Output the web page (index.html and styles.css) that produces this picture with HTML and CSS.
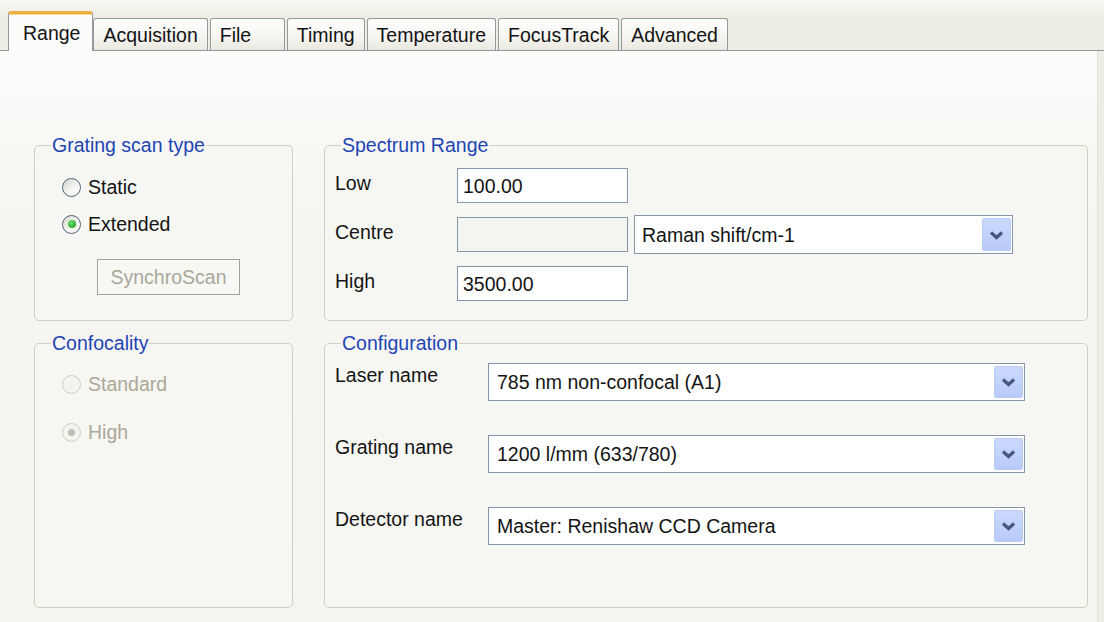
FILE: index.html
```html
<!DOCTYPE html>
<html lang="en">
<head>
<meta charset="utf-8">
<title>Measurement setup</title>
<link rel="stylesheet" href="styles.css">
</head>
<body>
<div class="tabbar">
  <div class="tab tab-active">Range</div>
  <div class="tab">Acquisition</div>
  <div class="tab">File</div>
  <div class="tab">Timing</div>
  <div class="tab">Temperature</div>
  <div class="tab">FocusTrack</div>
  <div class="tab">Advanced</div>
</div>

<div class="panel">
  <div class="groups">
    <fieldset class="group">
      <legend>Grating scan type</legend>
      <div class="group-body scan-body">
        <div class="radio"><span class="radio-circle"></span>Static</div>
        <div class="radio radio-gap"><span class="radio-circle checked"></span>Extended</div>
        <div class="synchro">SynchroScan</div>
      </div>
    </fieldset>

    <fieldset class="group">
      <legend>Spectrum Range</legend>
      <div class="group-body range-body">
        <div class="field-row">
          <span class="field-label range-label">Low</span>
          <span class="textbox">100.00</span>
        </div>
        <div class="field-row">
          <span class="field-label range-label">Centre</span>
          <span class="textbox textbox-disabled"></span>
          <div class="select select-units">
            <span class="select-text">Raman shift/cm-1</span>
            <span class="select-btn"><svg width="15" height="10" viewBox="0 0 15 10"><polyline points="2,2.5 7.5,7.5 13,2.5" fill="none" stroke="#46587c" stroke-width="3.2"/></svg></span>
          </div>
        </div>
        <div class="field-row">
          <span class="field-label range-label">High</span>
          <span class="textbox">3500.00</span>
        </div>
      </div>
    </fieldset>

    <fieldset class="group">
      <legend>Confocality</legend>
      <div class="group-body confocal-body">
        <div class="radio radio-disabled"><span class="radio-circle"></span>Standard</div>
        <div class="radio radio-disabled radio-gap-wide"><span class="radio-circle checked"></span>High</div>
      </div>
    </fieldset>

    <fieldset class="group">
      <legend>Configuration</legend>
      <div class="group-body config-body">
        <div class="config-row">
          <span class="field-label config-label">Laser name</span>
          <div class="select select-config">
            <span class="select-text">785 nm non-confocal (A1)</span>
            <span class="select-btn"><svg width="15" height="10" viewBox="0 0 15 10"><polyline points="2,2.5 7.5,7.5 13,2.5" fill="none" stroke="#46587c" stroke-width="3.2"/></svg></span>
          </div>
        </div>
        <div class="config-row">
          <span class="field-label config-label">Grating name</span>
          <div class="select select-config">
            <span class="select-text">1200 l/mm (633/780)</span>
            <span class="select-btn"><svg width="15" height="10" viewBox="0 0 15 10"><polyline points="2,2.5 7.5,7.5 13,2.5" fill="none" stroke="#46587c" stroke-width="3.2"/></svg></span>
          </div>
        </div>
        <div class="config-row">
          <span class="field-label config-label">Detector name</span>
          <div class="select select-config">
            <span class="select-text">Master: Renishaw CCD Camera</span>
            <span class="select-btn"><svg width="15" height="10" viewBox="0 0 15 10"><polyline points="2,2.5 7.5,7.5 13,2.5" fill="none" stroke="#46587c" stroke-width="3.2"/></svg></span>
          </div>
        </div>
      </div>
    </fieldset>
  </div>
</div>
</body>
</html>
```

FILE: styles.css
```css
html, body {
  margin: 0;
  padding: 0;
}

body {
  width: 1104px;
  height: 622px;
  overflow: hidden;
  display: flex;
  flex-direction: column;
  background: #efeee5;
  font-family: "Liberation Sans", Arial, sans-serif;
  font-size: 19.5px;
  color: #141414;
}

/* ---- tab strip ---- */
.tabbar {
  height: 51px;
  box-sizing: border-box;
  display: flex;
  align-items: flex-end;
  padding-left: 8px;
  border-bottom: 1px solid #919b9c;
  background: linear-gradient(#f7f7f2, #eeede3 40%);
}

.tab {
  height: 32px;
  min-width: 75px;
  box-sizing: border-box;
  display: flex;
  align-items: center;
  padding: 1px 9px 0;
  margin-right: 2px;
  line-height: 22px;
  white-space: nowrap;
  border: 1px solid #919b9c;
  border-bottom: none;
  border-radius: 3px 3px 0 0;
  background: linear-gradient(#ffffff, #f6f5f1 55%, #e9e8e0);
}

.tab-active {
  position: relative;
  height: 40px;
  margin-bottom: -1px;
  margin-right: 0;
  padding: 0 12px 0 14px;
  border-top: 3px solid #eeae46;
  box-shadow: inset 0 1px 0 #f9d890;
  background: #fcfcfa;
}

/* ---- page body ---- */
.panel {
  flex: 1;
  margin-right: 6px;
  border-right: 1px solid #e2e1d8;
  padding: 83px 0 0 34px;
  background: linear-gradient(#fcfcfb, #f6f5f1 30%, #f5f4f0);
}

.groups {
  display: grid;
  grid-template-columns: 259px 764px;
  grid-template-rows: 187px 276px;
  column-gap: 31px;
  row-gap: 11px;
}

.group {
  margin: 0;
  padding: 0;
  min-width: 0;
  box-sizing: border-box;
  border: 1px solid #d0d0bf;
  border-radius: 5px;
  background: #f6f6f2;
}

.group legend {
  margin-left: 16px;
  padding: 0 1px;
  line-height: 22px;
  color: #1f45b4;
}

.group-body {
  display: flex;
  flex-direction: column;
  align-items: flex-start;
}

/* ---- radio buttons ---- */
.scan-body { padding: 17px 0 0 27px; }
.confocal-body { padding: 16px 0 0 27px; }

.radio {
  height: 28px;
  display: flex;
  align-items: center;
  gap: 7px;
  line-height: 22px;
}

.radio-gap { margin-top: 9px; }
.radio-gap-wide { margin-top: 20px; }

.radio-circle {
  width: 19px;
  height: 19px;
  box-sizing: border-box;
  border-radius: 50%;
  border: 1px solid #4f6378;
  background: linear-gradient(135deg, #d8d8d0, #f4f4f0 55%, #ffffff);
  display: flex;
  align-items: center;
  justify-content: center;
}

.radio-circle.checked::after {
  content: "";
  width: 8px;
  height: 8px;
  border-radius: 50%;
  background: radial-gradient(circle at 40% 35%, #6fe06f, #2ea82e 70%, #1e8a1e);
}

.radio-disabled { color: #aca899; }

.radio-disabled .radio-circle {
  border-color: #cfcdc2;
  background: #f4f3ee;
}

.radio-disabled .radio-circle.checked::after {
  background: #bfbdb1;
  width: 7px;
  height: 7px;
}

.synchro {
  margin: 21px 0 0 35px;
  width: 143px;
  height: 36px;
  box-sizing: border-box;
  border: 1px solid #a3a39b;
  display: flex;
  align-items: center;
  justify-content: center;
  color: #a9a89c;
  background: #f7f7f3;
}

/* ---- text fields ---- */
.range-body { padding: 12px 0 0 10px; }

.field-row {
  display: flex;
  align-items: center;
  height: 35px;
  margin-bottom: 14px;
}

.field-label {
  align-self: flex-start;
  line-height: 22px;
  white-space: nowrap;
}

.range-label {
  width: 122px;
  padding-top: 4px;
}

.textbox {
  width: 171px;
  height: 35px;
  box-sizing: border-box;
  border: 1px solid #8396aa;
  background: #ffffff;
  padding: 0 5px;
  display: flex;
  align-items: center;
  line-height: 22px;
}

.textbox-disabled { background: #f4f4f0; }

/* ---- drop-down lists ---- */
.select {
  display: flex;
  align-items: center;
  box-sizing: border-box;
  border: 1px solid #8396aa;
  background: #ffffff;
  line-height: 22px;
}

.select-text {
  flex: 1;
  padding-left: 7px;
  white-space: nowrap;
}

.select-units {
  width: 379px;
  height: 39px;
  margin-left: 6px;
}

.select-btn {
  width: 29px;
  height: calc(100% - 4px);
  margin-right: 1px;
  box-sizing: border-box;
  border: 1px solid #b8caf5;
  border-radius: 2px;
  background: linear-gradient(#cad9fd, #b8cbf8);
  display: flex;
  align-items: center;
  justify-content: center;
}

.config-body { padding: 9px 0 0 10px; }

.config-row {
  display: flex;
  align-items: flex-start;
  margin-bottom: 34px;
}

.config-label {
  width: 153px;
  padding-top: 1px;
}

.select-config {
  width: 537px;
  height: 38px;
}

.select-config .select-text { padding-left: 8px; }
```
